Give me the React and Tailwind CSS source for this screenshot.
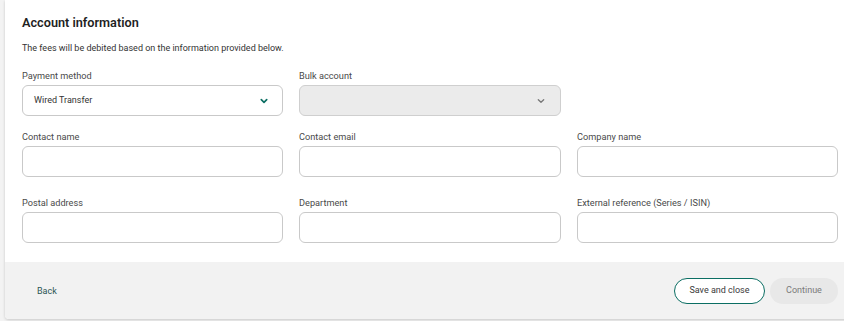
import { useState } from 'react';

function Chevron({ disabled }) {
  return (
    <svg
      className="w-[10px] h-[10px]"
      viewBox="0 0 10 10"
      fill="none"
      stroke={disabled ? '#777777' : '#0b6e63'}
      strokeWidth={disabled ? 1.3 : 1.7}
      strokeLinecap="round"
      strokeLinejoin="round"
    >
      <path d="M2.3 3.7 5 6.3 7.7 3.7" />
    </svg>
  );
}

function Field({ label, children, className = '' }) {
  return (
    <div className={className}>
      <label className="block text-[9.2px] leading-[12px] text-[#4a4a4a] mb-[3px]">{label}</label>
      {children}
    </div>
  );
}

function TextInput() {
  return (
    <input
      type="text"
      className="w-full h-[31px] rounded-[6px] border border-[#c9c9c9] bg-white px-[10px] text-[9px] outline-none"
    />
  );
}

export default function App() {
  const [method] = useState('Wired Transfer');

  return (
    <div
      className="min-h-screen w-[844px] h-[321px] overflow-hidden bg-[#f3f3f3] pl-[5px]"
      style={{ fontFamily: 'Roboto, "Liberation Sans", sans-serif' }}
    >
      <div className="w-[860px] h-[319px] bg-white rounded-bl-[4px] shadow-[0_1px_3px_rgba(0,0,0,0.18)] flex flex-col">
        <div className="flex-1 pl-[17px] pt-[14px]">
          <h2 className="text-[12.7px] leading-[18px] font-semibold text-[#1f1f1f]">Account information</h2>
          <p className="mt-[10px] text-[9px] leading-[12px] text-[#333]">
            The fees will be debited based on the information provided below.
          </p>

          <div className="mt-[16px] grid grid-cols-[261px_262px_261px] gap-x-[16px]">
            <Field label="Payment method">
              <div className="mt-[1px] h-[31px] rounded-[6px] border border-[#c9c9c9] bg-white pl-[11px] pr-[13px] flex items-center justify-between">
                <span className="text-[9px] text-[#333]">{method}</span>
                <Chevron />
              </div>
            </Field>
            <Field label="Bulk account">
              <div className="mt-[1px] h-[31px] rounded-[6px] border border-[#cfcfcf] bg-[#ebebeb] pr-[14px] flex items-center justify-end">
                <Chevron disabled />
              </div>
            </Field>
            <div />
          </div>

          <div className="mt-[15px] grid grid-cols-[261px_262px_261px] gap-x-[16px]">
            <Field label="Contact name"><TextInput /></Field>
            <Field label="Contact email"><TextInput /></Field>
            <Field label="Company name"><TextInput /></Field>
          </div>

          <div className="mt-[20px] grid grid-cols-[261px_262px_261px] gap-x-[16px]">
            <Field label="Postal address"><TextInput /></Field>
            <Field label="Department"><TextInput /></Field>
            <Field label="External reference (Series / ISIN)"><TextInput /></Field>
          </div>
        </div>

        <div className="h-[57px] bg-[#f2f2f2] rounded-bl-[4px] flex items-center pl-[32px] pr-[11px] w-[844px]">
          <button className="mt-[2px] text-[9px] text-[#2d5552]">Back</button>
          <div className="ml-auto flex items-center gap-[5px]">
            <button className="h-[26px] w-[91px] rounded-full border border-[#0b6e63] bg-white text-[9px] text-[#3a3a3a]">
              Save and close
            </button>
            <button className="h-[26px] w-[68px] rounded-full bg-[#e8e8e8] text-[9px] text-[#7a7a7a]">
              Continue
            </button>
          </div>
        </div>
      </div>
    </div>
  );
}
